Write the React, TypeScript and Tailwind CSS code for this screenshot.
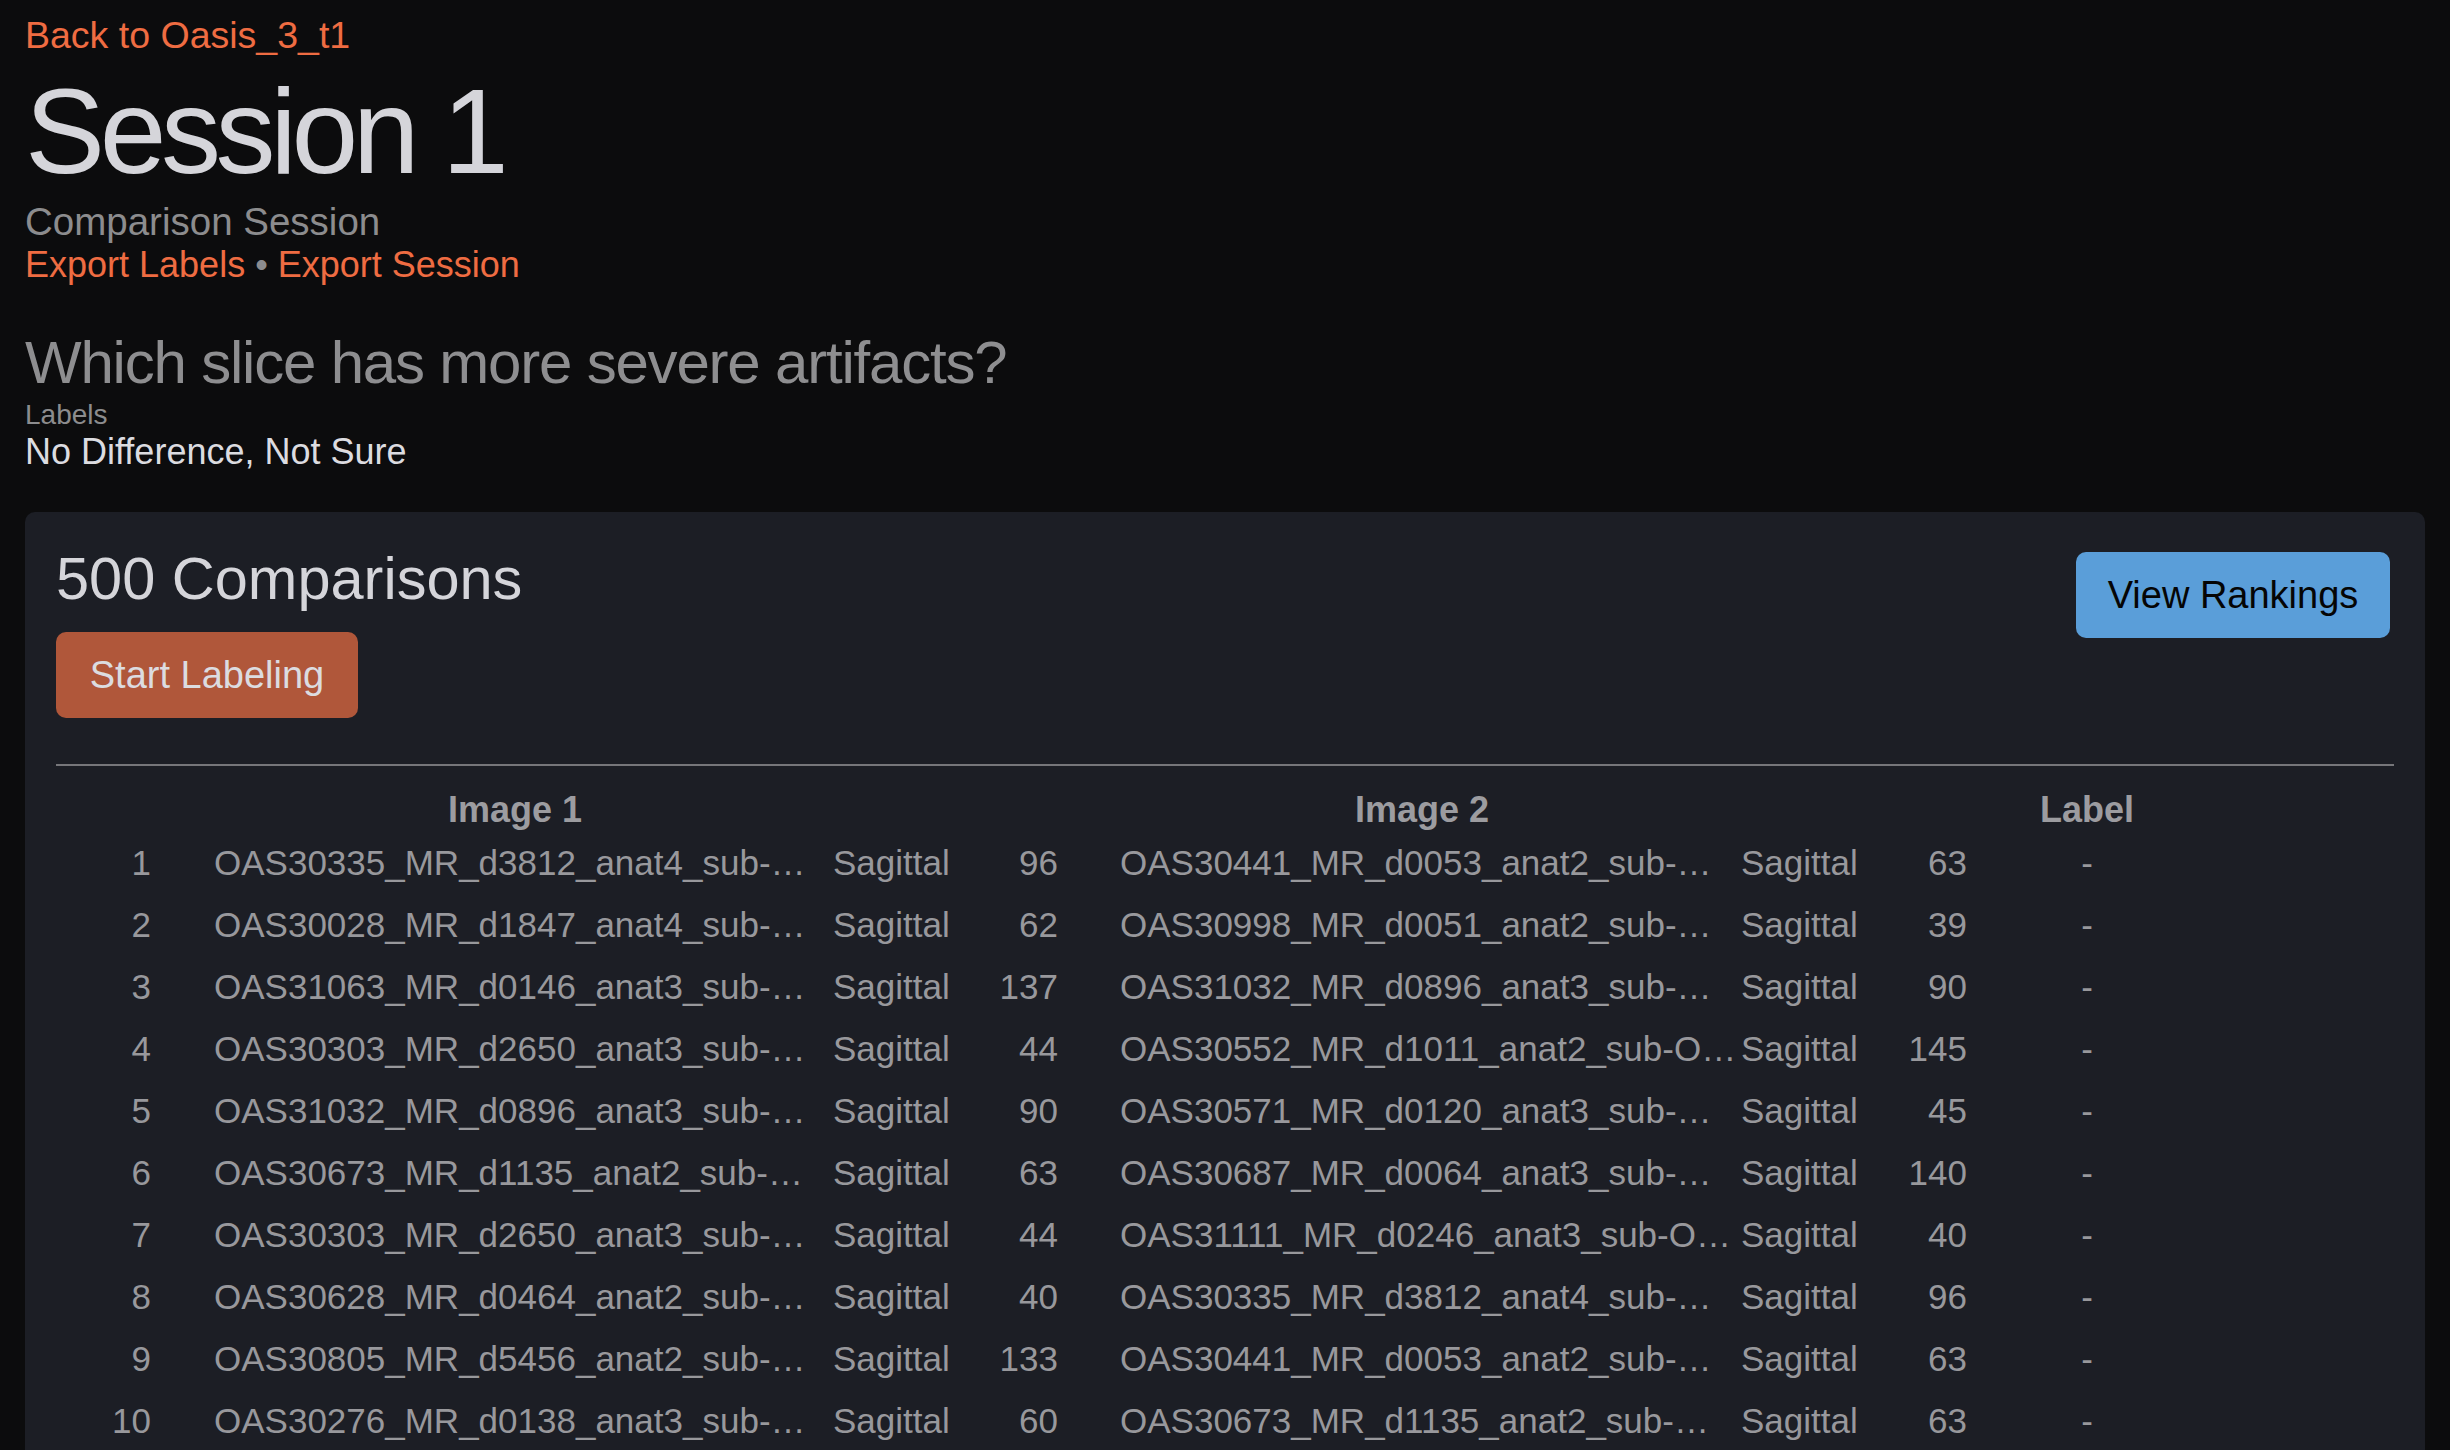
import React from "react";

type Row = { i: number; a: string; an: number; b: string; bn: number };

const rows: Row[] = [
  { i: 1, a: "OAS30335_MR_d3812_anat4_sub-…", an: 96, b: "OAS30441_MR_d0053_anat2_sub-…", bn: 63 },
  { i: 2, a: "OAS30028_MR_d1847_anat4_sub-…", an: 62, b: "OAS30998_MR_d0051_anat2_sub-…", bn: 39 },
  { i: 3, a: "OAS31063_MR_d0146_anat3_sub-…", an: 137, b: "OAS31032_MR_d0896_anat3_sub-…", bn: 90 },
  { i: 4, a: "OAS30303_MR_d2650_anat3_sub-…", an: 44, b: "OAS30552_MR_d1011_anat2_sub-O…", bn: 145 },
  { i: 5, a: "OAS31032_MR_d0896_anat3_sub-…", an: 90, b: "OAS30571_MR_d0120_anat3_sub-…", bn: 45 },
  { i: 6, a: "OAS30673_MR_d1135_anat2_sub-…", an: 63, b: "OAS30687_MR_d0064_anat3_sub-…", bn: 140 },
  { i: 7, a: "OAS30303_MR_d2650_anat3_sub-…", an: 44, b: "OAS31111_MR_d0246_anat3_sub-O…", bn: 40 },
  { i: 8, a: "OAS30628_MR_d0464_anat2_sub-…", an: 40, b: "OAS30335_MR_d3812_anat4_sub-…", bn: 96 },
  { i: 9, a: "OAS30805_MR_d5456_anat2_sub-…", an: 133, b: "OAS30441_MR_d0053_anat2_sub-…", bn: 63 },
  { i: 10, a: "OAS30276_MR_d0138_anat3_sub-…", an: 60, b: "OAS30673_MR_d1135_anat2_sub-…", bn: 63 },
];

export default function App() {
  return (
    <div className="min-h-screen bg-[#0c0c0d] px-[25px] pt-[8px] font-['Liberation_Sans',Arial,sans-serif]">
      <a className="block text-[37.5px] leading-[54px] text-[#ef6c42]">Back to Oasis_3_t1</a>
      <h1 className="text-[120px] leading-[138px] tracking-[-0.045em] text-[#d5d5da]">Session 1</h1>
      <div className="text-[38.5px] leading-[44px] text-[#8c8c8e]">Comparison Session</div>
      <div className="text-[36px] leading-[41px] whitespace-nowrap">
        <a className="text-[#ef6c42]">Export Labels</a>
        <span className="text-[#8c8c8e]"> • </span>
        <a className="text-[#ef6c42]">Export Session</a>
      </div>

      <h2 className="mt-[42px] text-[60px] leading-[72px] tracking-[-0.02em] text-[#8e8e90]">
        Which slice has more severe artifacts?
      </h2>
      <div className="text-[28px] leading-[32px] text-[#8c8c8e]">Labels</div>
      <div className="text-[36px] leading-[41px] text-[#dcdce0]">No Difference, Not Sure</div>

      <div className="mt-[40px] rounded-[10px] bg-[#1c1e25] px-[31px] pt-[31px] pb-[32px]">
        <div className="flex items-start justify-between">
          <div className="flex flex-col items-start">
            <div className="text-[59.5px] leading-[72px] text-[#d5d5da]">500 Comparisons</div>
            <button className="mt-[17px] flex h-[86px] w-[302px] items-center justify-center rounded-[10px] bg-[#b0573a] text-[38px] text-[#dcdce0]">
              Start Labeling
            </button>
          </div>
          <button className="mt-[9px] mr-[4px] flex h-[86px] w-[314px] items-center justify-center rounded-[10px] bg-[#5a9ed9] text-[38px] text-[#050505]">
            View Rankings
          </button>
        </div>

        <div className="mt-[46px] h-[2px] bg-[#76767a]" />

        <table className="mt-[22px] w-full table-fixed border-collapse text-[#98989c]">
          <colgroup>
            <col className="w-[95px]" />
            <col className="w-[682px]" />
            <col className="w-[147px]" />
            <col className="w-[78px]" />
            <col className="w-[683px]" />
            <col className="w-[147px]" />
            <col className="w-[79px]" />
            <col className="w-[240px]" />
            <col />
          </colgroup>
          <thead>
            <tr className="h-[44px] text-[36px] leading-[44px] font-bold text-[#9c9ca0]">
              <th className="p-0" />
              <th className="p-0 pl-[63px] pr-[17px] text-center">Image 1</th>
              <th className="p-0" />
              <th className="p-0" />
              <th className="p-0 pl-[62px] pr-[17px] text-center">Image 2</th>
              <th className="p-0" />
              <th className="p-0" />
              <th className="p-0 text-center">Label</th>
              <th className="p-0" />
            </tr>
          </thead>
          <tbody className="text-[35px]">
            {rows.map((r) => (
              <tr key={r.i} className="h-[62px]">
                <td className="p-0 text-right">{r.i}</td>
                <td className="overflow-hidden whitespace-nowrap p-0 pl-[63px] pr-[4px]">{r.a}</td>
                <td className="p-0">Sagittal</td>
                <td className="p-0 text-right">{r.an}</td>
                <td className="overflow-hidden whitespace-nowrap p-0 pl-[62px] pr-[4px]">{r.b}</td>
                <td className="p-0">Sagittal</td>
                <td className="p-0 text-right">{r.bn}</td>
                <td className="p-0 text-center">-</td>
                <td className="p-0" />
              </tr>
            ))}
          </tbody>
        </table>
      </div>
    </div>
  );
}
